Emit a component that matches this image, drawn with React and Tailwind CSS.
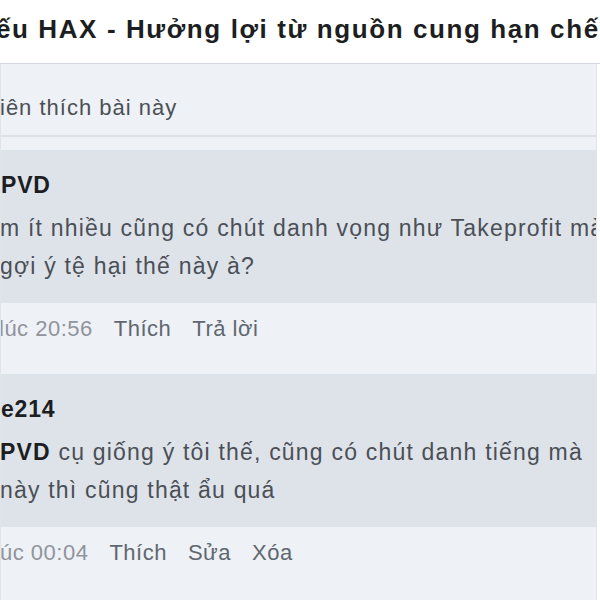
import React from 'react';

// Zoomed-in crop of a comment thread: text is cut at the left and right edges.

const comments = [
  {
    name: 'PVD',
    lines: [
      [{ t: 'm ít nhiều cũng có chút danh vọng như Takeprofit mà' }],
      [{ t: 'gợi ý tệ hại thế này à?' }],
    ],
    time: 'lúc 20:56',
    actions: ['Thích', 'Trả lời'],
    shift: '-ml-[2px]',
  },
  {
    name: 'e214',
    lines: [
      [{ t: 'PVD', b: true }, { t: ' cụ giống ý tôi thế, cũng có chút danh tiếng mà' }],
      [{ t: 'này thì cũng thật ẩu quá' }],
    ],
    time: 'úc 00:04',
    actions: ['Thích', 'Sửa', 'Xóa'],
    shift: '-ml-[1px]',
  },
];

const Comment = ({ c }) => (
  <div>
    <div className="bg-[#dee3ea] pt-[20px] pb-[18px]">
      <div className="text-[23px] leading-[30px] font-bold tracking-[0.8px] text-[#1c1e21] whitespace-nowrap">
        {c.name}
      </div>
      <div className="mt-[9px] text-[23px] leading-[38px] tracking-[1.2px] text-[#4b4f56] whitespace-nowrap">
        {c.lines.map((line, i) => (
          <div key={i} className="-ml-[1px]">
            {line.map((s, j) => (
              <span key={j} className={s.b ? 'font-bold text-[#1c1e21]' : ''}>
                {s.t}
              </span>
            ))}
          </div>
        ))}
      </div>
    </div>
    <div className={`mt-[11px] flex gap-[21px] text-[22px] leading-[30px] tracking-[0.5px] whitespace-nowrap ${c.shift}`}>
      <span className="text-[#90949c]">{c.time}</span>
      {c.actions.map((a) => (
        <span key={a} className="text-[#606770]">
          {a}
        </span>
      ))}
    </div>
  </div>
);

export default function App() {
  return (
    <div
      className="w-[600px] h-[600px] overflow-hidden bg-white"
      style={{ fontFamily: '"Liberation Sans", Arial, sans-serif' }}
    >
      <div className="h-[64px] flex items-center border-b border-[#d5d9df] overflow-hidden">
        <div className="-ml-[4px] -mt-[5px] text-[26px] font-bold tracking-[1.6px] text-[#1c1e21] whitespace-nowrap">
          ếu HAX - Hưởng lợi từ nguồn cung hạn chế
        </div>
      </div>

      <div className="w-[597px] h-[536px] bg-[#eef1f5] border-l border-r border-[#e1e5ea] overflow-hidden">
        <div className="h-[73px] border-b-2 border-[#dde1e6] pt-[29px]">
          <div className="-ml-[1px] text-[22px] leading-[30px] tracking-[1px] text-[#4b4f56] whitespace-nowrap">
            iên thích bài này
          </div>
        </div>

        <div className="pt-[13px] flex flex-col gap-[30px]">
          {comments.map((c, i) => (
            <Comment key={i} c={c} />
          ))}
        </div>
      </div>
    </div>
  );
}
